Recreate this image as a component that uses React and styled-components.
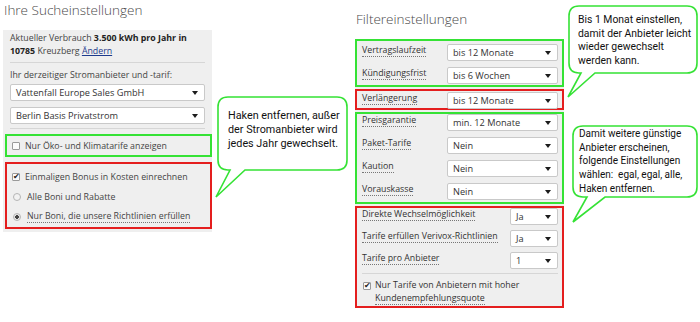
import React from 'react';
import styled, { createGlobalStyle } from 'styled-components';

const GlobalStyle = createGlobalStyle`
  html, body {
    margin: 0;
    padding: 0;
    background: #ffffff;
  }
  body {
    font-family: "Open Sans", "Noto Sans", Arial, sans-serif;
    color: #333;
  }
`;

const GREEN = '#35e235';
const RED = '#e41e1e';

const Page = styled.div`
  position: relative;
  width: 700px;
  height: 322px;
  overflow: hidden;
  display: flex;
  align-items: flex-start;
`;

const LeftColumn = styled.div`
  width: 209px;
  margin-left: 3px;
`;

const RightColumn = styled.div`
  width: 209px;
  margin-left: 143px;
`;

const Heading = styled.h2`
  margin: 0;
  height: ${(props) => props.$height}px;
  padding-top: ${(props) => props.$top}px;
  box-sizing: border-box;
  padding-left: 1px;
  font-size: 13.5px;
  font-weight: 300;
  line-height: 21px;
  color: #4a4a4a;
`;

const Panel = styled.div`
  background: #efefef;
  display: flex;
  flex-direction: column;
  padding: ${(props) => props.$padding || '0'};
`;

const Info = styled.p`
  margin: 0 7px;
  padding-top: 2px;
  font-size: 8.8px;
  line-height: 13px;
  color: #444;

  b {
    color: #222;
    font-weight: 700;
  }
`;

const Link = styled.a`
  color: #1d3a8c;
  text-decoration: underline;
`;

const Divider = styled.div`
  border-top: 1px solid #d6d6d6;
  margin: ${(props) => props.$margin};
`;

const Caption = styled.div`
  margin: 0 7px;
  font-size: 8.8px;
  line-height: 13px;
  color: #444;
`;

const SelectBox = styled.div`
  position: relative;
  box-sizing: border-box;
  width: ${(props) => (props.$width ? `${props.$width}px` : 'auto')};
  height: 17px;
  margin: ${(props) => props.$margin || '0'};
  background: #ffffff;
  border: 1px solid #c9c9c9;
  border-radius: 2px;
  padding-left: 5px;
  font-size: 9.2px;
  line-height: 15px;
  color: #333;
  flex-shrink: 0;

  &::after {
    content: '';
    position: absolute;
    right: 6px;
    top: 6px;
    border-left: 3px solid transparent;
    border-right: 3px solid transparent;
    border-top: 4px solid #1c1c1c;
  }
`;

const Frame = styled.div`
  box-sizing: border-box;
  border: 2px solid ${(props) => (props.$tone === 'red' ? RED : GREEN)};
  margin: ${(props) => props.$margin || '0'};
  padding: ${(props) => props.$padding || '0'};
  height: ${(props) => (props.$height ? `${props.$height}px` : 'auto')};
  display: flex;
  flex-direction: column;
  gap: ${(props) => props.$gap || 0}px;
`;

const OptionRow = styled.label`
  display: flex;
  align-items: center;
  gap: ${(props) => props.$gap || 5}px;
  height: ${(props) => props.$height || 21}px;
  font-size: 8.8px;
  color: #444;
`;

const Tick = styled.span`
  box-sizing: border-box;
  width: 8px;
  height: 8px;
  border: 1px solid #9a9a9a;
  border-radius: 1px;
  background: #fbfbfb;
  position: relative;
  flex-shrink: 0;

  &::after {
    content: ${(props) => (props.$checked ? "'✔'" : "''")};
    position: absolute;
    left: 0px;
    top: -3px;
    font-size: 8px;
    line-height: 10px;
    color: #222;
  }
`;

const Radio = styled.span`
  box-sizing: border-box;
  width: 8px;
  height: 8px;
  margin-left: 1px;
  border: 1px solid #b5b5b5;
  border-radius: 50%;
  background: ${(props) => (props.$checked ? 'radial-gradient(circle, #444 0 1.6px, #e6e6e6 2px)' : '#f2f2f2')};
  flex-shrink: 0;
`;

const Dotted = styled.span`
  border-bottom: 1px dotted #777;
  line-height: 11px;
`;

const FilterRow = styled.div`
  display: flex;
  align-items: center;
  justify-content: space-between;
  height: 17px;
`;

const FilterLabel = styled.span`
  font-size: 8.8px;
  line-height: 11px;
  color: #333;
  border-bottom: 1px dotted #777;
  margin-top: -3px;
  white-space: nowrap;
`;

const CheckBlock = styled.div`
  display: flex;
  gap: 4px;
  font-size: 8.8px;
  line-height: 13px;
  color: #333;
  padding-left: 1px;

  ${Tick} {
    margin-top: 3px;
  }
`;

const Bubble = styled.div`
  position: absolute;
  left: ${(props) => props.$x}px;
  top: ${(props) => props.$y}px;
  width: ${(props) => props.$w}px;
  height: ${(props) => props.$h}px;
`;

const BubbleShape = styled.svg`
  position: absolute;
  left: -4px;
  top: -4px;
  overflow: visible;
`;

const BubbleText = styled.div`
  position: relative;
  padding: ${(props) => props.$pad};
  font-family: Roboto, "Open Sans", Arial, sans-serif;
  font-size: ${(props) => props.$size}px;
  line-height: ${(props) => props.$lh}px;
  color: #111;
  white-space: nowrap;
`;

function bubblePath(w, h, r, a, b, tx, ty) {
  return [
    `M ${r} 0`,
    `H ${w - r}`,
    `Q ${w} 0 ${w} ${r}`,
    `V ${h - r}`,
    `Q ${w} ${h} ${w - r} ${h}`,
    `H ${b}`,
    `L ${tx} ${ty}`,
    `L ${a} ${h}`,
    `H ${r}`,
    `Q 0 ${h} 0 ${h - r}`,
    `V ${r}`,
    `Q 0 0 ${r} 0`,
    'Z',
  ].join(' ');
}

const Callout = ({ x, y, w, h, tail, pad, lh, size = 10.4, children }) => {
  const [a, b, tx, ty] = tail;
  return (
    <Bubble $x={x} $y={y} $w={w} $h={h}>
      <BubbleShape width={w + 8} height={Math.max(h, ty) + 8}>
        <g transform="translate(4 4)">
          <path
            d={bubblePath(w, h, 10, a, b, tx, ty)}
            fill="#ffffff"
            stroke={GREEN}
            strokeWidth="1.6"
            strokeLinejoin="miter"
          />
        </g>
      </BubbleShape>
      <BubbleText $pad={pad} $lh={lh} $size={size}>{children}</BubbleText>
    </Bubble>
  );
};

const filtersTop = [
  { label: 'Vertragslaufzeit', value: 'bis 12 Monate' },
  { label: 'Kündigungsfrist', value: 'bis 6 Wochen' },
];

const filtersMiddle = [
  { label: 'Preisgarantie', value: 'min. 12 Monate' },
  { label: 'Paket-Tarife', value: 'Nein' },
  { label: 'Kaution', value: 'Nein' },
  { label: 'Vorauskasse', value: 'Nein' },
];

const filtersBottom = [
  { label: 'Direkte Wechselmöglichkeit', value: 'Ja' },
  { label: 'Tarife erfüllen Verivox-Richtlinien', value: 'Ja' },
  { label: 'Tarife pro Anbieter', value: '1' },
];

const Filter = ({ label, value, width = 111 }) => (
  <FilterRow>
    <FilterLabel>{label}</FilterLabel>
    <SelectBox $width={width}>{value}</SelectBox>
  </FilterRow>
);

export default function App() {
  return (
    <>
      <GlobalStyle />
      <Page>
        <LeftColumn>
          <Heading $height={30} $top={0}>Ihre Sucheinstellungen</Heading>
          <Panel $padding="0 0 3px 0">
            <Info>
              Aktueller Verbrauch <b>3.500 kWh pro Jahr in</b>
              <br />
              <b>10785</b> Kreuzberg <Link>Ändern</Link>
            </Info>
            <Divider $margin="4px 7px 6px 7px" />
            <Caption>Ihr derzeitiger Stromanbieter und -tarif:</Caption>
            <SelectBox $margin="2px 7px 0 7px">Vattenfall Europe Sales GmbH</SelectBox>
            <SelectBox $margin="6px 7px 0 7px">Berlin Basis Privatstrom</SelectBox>
            <Divider $margin="4px 7px 0 7px" />
            <Frame $margin="5px 0 0 2px" $padding="0 0 0 5px" $height={23}>
              <OptionRow $height={19}>
                <Tick />
                Nur Öko- und Klimatarife anzeigen
              </OptionRow>
            </Frame>
            <Frame $tone="red" $margin="5px 0 0 2px" $padding="3px 0 0 5px" $height={67}>
              <OptionRow>
                <Tick $checked />
                Einmaligen Bonus in Kosten einrechnen
              </OptionRow>
              <OptionRow $gap={6}>
                <Radio />
                Alle Boni und Rabatte
              </OptionRow>
              <OptionRow $gap={6}>
                <Radio $checked />
                <Dotted>Nur Boni, die unsere Richtlinien erfüllen</Dotted>
              </OptionRow>
            </Frame>
          </Panel>
        </LeftColumn>

        <RightColumn>
          <Heading $height={39} $top={9}>Filtereinstellungen</Heading>
          <Panel>
            <Frame $height={48} $padding="3px 4px 0 5px" $gap={6}>
              {filtersTop.map((f) => (
                <Filter key={f.label} {...f} />
              ))}
            </Frame>
            <Frame $tone="red" $margin="2px 0 0 0" $height={21} $padding="1px 4px 0 5px">
              <Filter label="Verlängerung" value="bis 12 Monate" />
            </Frame>
            <Frame $margin="2px 0 0 0" $height={92} $padding="0 4px 0 5px" $gap={6}>
              {filtersMiddle.map((f) => (
                <Filter key={f.label} {...f} />
              ))}
            </Frame>
            <Frame $tone="red" $margin="2px 0 0 0" $height={102} $padding="0 4px 0 5px" $gap={5}>
              {filtersBottom.map((f) => (
                <Filter key={f.label} {...f} width={48} />
              ))}
              <Divider $margin="-1px 0 0 0" />
              <CheckBlock>
                <Tick $checked />
                <span>
                  Nur Tarife von Anbietern mit hoher
                  <br />
                  <Dotted>Kundenempfehlungsquote</Dotted>
                </span>
              </CheckBlock>
            </Frame>
          </Panel>
        </RightColumn>

        <Callout x={218} y={97} w={129} h={73} tail={[12, 27, -2, 100]} pad="12px 6px 0 10px" lh={14} size={10.8}>
          Haken entfernen, außer
          <br />
          der Stromanbieter wird
          <br />
          jedes Jahr gewechselt.
        </Callout>

        <Callout x={569} y={6} w={128} h={67} tail={[12, 26, -1, 91]} pad="7px 4px 0 9px" lh={13.5} size={10.4}>
          Bis 1 Monat einstellen,
          <br />
          damit der Anbieter leicht
          <br />
          wieder gewechselt
          <br />
          werden kann.
        </Callout>

        <Callout x={573} y={126} w={124} h={71} tail={[14, 32, 0, 96]} pad="1px 4px 0 6px" lh={13.7} size={10}>
          Damit weitere günstige
          <br />
          Anbieter erscheinen,
          <br />
          folgende Einstellungen
          <br />
          wählen:&nbsp; egal, egal, alle,
          <br />
          Haken entfernen.
        </Callout>
      </Page>
    </>
  );
}
